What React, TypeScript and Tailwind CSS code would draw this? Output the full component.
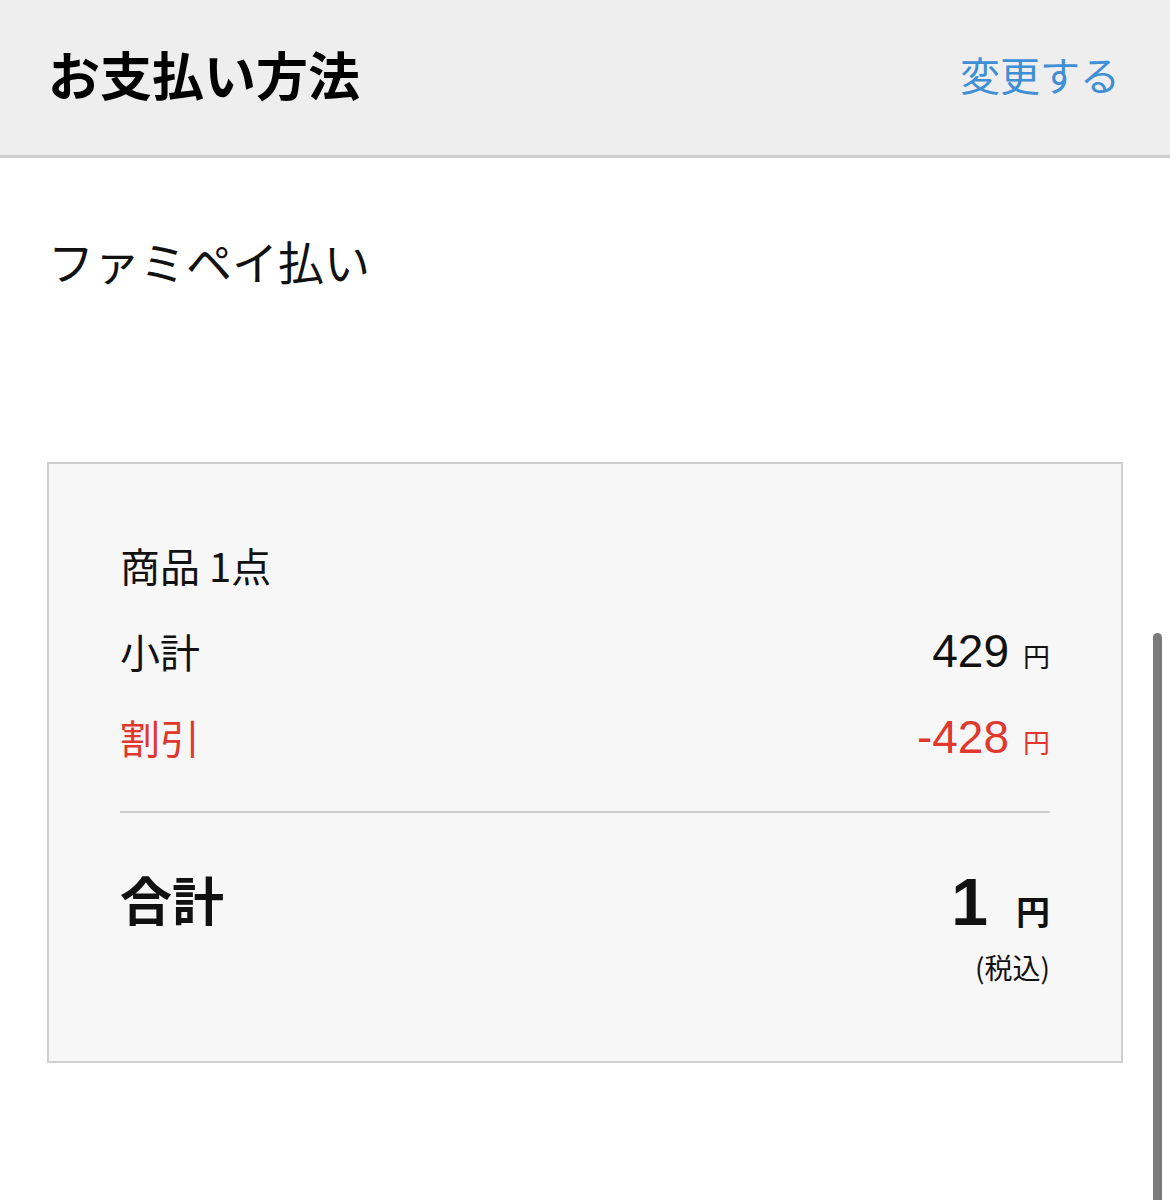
import React from "react";

const jp = { fontFamily: '"Noto Sans CJK JP", sans-serif' };
const num = { fontFamily: '"Liberation Sans", "Noto Sans CJK JP", sans-serif' };

export default function App() {
  return (
    <div className="relative w-[1170px] h-[1200px] bg-white overflow-hidden text-[#111]" style={jp}>
      {/* header */}
      <div className="h-[158px] bg-[#eeeeee] border-b-[3px] border-[#cfcfcf] flex items-center justify-between pl-[48px] pr-[50px] pb-[8px]">
        <div className="text-[52px] font-bold leading-none text-black">お支払い方法</div>
        <div className="text-[40px] leading-none text-[#3f8fd4]">変更する</div>
      </div>

      {/* selected method */}
      <div className="pl-[48px] pt-[79px] text-[46px] leading-none text-[#111]">ファミペイ払い</div>

      {/* summary box */}
      <div className="mt-[179px] ml-[47px] w-[1076px] h-[601px] border-2 border-[#cfcfcf] bg-[#f7f7f7] px-[71px] pt-[58px]">
        <div className="h-[86px] flex items-center text-[40px] leading-none">商品&nbsp;1点</div>
        <div className="h-[86px] flex items-center justify-between">
          <span className="text-[40px] leading-none">小計</span>
          <span className="flex items-baseline">
            <span className="text-[46px] leading-none" style={num}>429</span>
            <span className="ml-[14px] text-[27px] leading-none">円</span>
          </span>
        </div>
        <div className="h-[86px] flex items-center justify-between text-[#e0382e]">
          <span className="text-[40px] leading-none">割引</span>
          <span className="flex items-baseline">
            <span className="text-[46px] leading-none" style={num}>-428</span>
            <span className="ml-[14px] text-[27px] leading-none">円</span>
          </span>
        </div>
        <div className="mt-[31px] h-[2px] bg-[#cfcfcf]" />
        <div className="mt-[56px] flex justify-between items-start">
          <span className="mt-[4px] text-[52px] font-bold leading-none">合計</span>
          <div className="flex flex-col items-end">
            <span className="flex items-baseline">
              <span className="text-[66px] font-bold leading-none" style={num}>1</span>
              <span className="ml-[28px] text-[34px] font-bold leading-none">円</span>
            </span>
            <span className="mt-[18px] text-[28px] leading-none">(税込)</span>
          </div>
        </div>
      </div>

      {/* scroll indicator */}
      <div className="absolute left-[1153px] top-[633px] w-[9px] h-[600px] rounded-full bg-[#7b7b7b]" />
    </div>
  );
}
